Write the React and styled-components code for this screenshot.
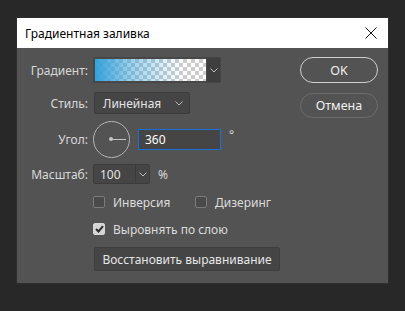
import React from "react";
import styled, { createGlobalStyle } from "styled-components";

const Global = createGlobalStyle`
  html, body { margin: 0; padding: 0; background: #282828; }
  body { font-family: "Noto Sans", "Open Sans", sans-serif; font-size: 12px; }
  * { box-sizing: border-box; }
`;

const Page = styled.div`
  width: 405px;
  height: 311px;
  padding: 18px 0 0 17px;
`;

const Dialog = styled.div`
  width: 371px;
  height: 265px;
  background: #535353;
  box-shadow: 0 0 0 1px #2e2e2e;
  display: flex;
  flex-direction: column;
`;

const TitleBar = styled.div`
  height: 30px;
  background: #ffffff;
  display: flex;
  align-items: center;
  justify-content: space-between;
  padding: 0 10px 0 8px;
  color: #000;
  font-size: 12px;
`;

const Close = styled.div`
  width: 14px;
  height: 14px;
  display: flex;
  align-items: center;
  justify-content: center;
`;

const Body = styled.div`
  flex: 1;
  display: flex;
  padding: 9px 10px 0 0;
`;

const Form = styled.div`
  flex: 1;
  display: flex;
  flex-direction: column;
`;

const Row = styled.div`
  display: grid;
  grid-template-columns: 71px auto;
  column-gap: 6px;
  align-items: center;
  height: ${(p) => p.$h}px;
  margin-top: ${(p) => p.$mt || 0}px;
`;

const Label = styled.div`
  text-align: right;
  color: #d8d8d8;
  white-space: nowrap;
`;

const Controls = styled.div`
  display: flex;
  align-items: center;
`;

const GradientBox = styled.div`
  width: 128px;
  height: 26px;
  border: 1px solid #464646;
  display: flex;
  background: #4a4a4a;
  margin-left: -1px;
`;

const Swatch = styled.div`
  width: 111px;
  margin: 1px;
  background:
    linear-gradient(to right, rgba(52, 162, 220, 1) 0%, rgba(62, 166, 220, 0.55) 30%, rgba(62, 166, 220, 0) 78%),
    repeating-conic-gradient(#ffffff 0 25%, #cccccc 0 50%) 0 0 / 8px 8px;
`;

const ArrowPart = styled.div`
  flex: 1;
  background: #3e3e3e;
  display: flex;
  align-items: center;
  justify-content: center;
`;

const Select = styled.div`
  width: ${(p) => p.$w}px;
  height: ${(p) => p.$h}px;
  background: #454545;
  border: 1px solid #3c3c3c;
  border-radius: 2px;
  display: flex;
  align-items: center;
  justify-content: space-between;
  padding: 0 6px 0 8px;
  color: #e4e4e4;
`;

const Combo = styled.div`
  width: 57px;
  height: 20px;
  background: #454545;
  border: 1px solid #3c3c3c;
  border-radius: 2px;
  display: flex;
  margin-left: -1px;
`;

const ComboValue = styled.div`
  width: 42px;
  display: flex;
  align-items: center;
  padding-left: 6px;
  color: #e4e4e4;
  border-right: 1px solid #3a3a3a;
`;

const ComboArrow = styled.div`
  flex: 1;
  display: flex;
  align-items: center;
  justify-content: center;
`;

const Dial = styled.div`
  width: 37px;
  height: 37px;
  border: 1.5px solid #b4b4b4;
  border-radius: 50%;
  position: relative;
  margin-left: -1px;
`;

const DialHand = styled.div`
  position: absolute;
  left: 16px;
  top: 16.5px;
  width: 16px;
  height: 1.5px;
  background: #c4c4c4;
`;

const DialDot = styled.div`
  position: absolute;
  left: 14.5px;
  top: 15px;
  width: 4px;
  height: 4px;
  border-radius: 50%;
  background: #c4c4c4;
`;

const Input = styled.div`
  width: 83px;
  height: 21px;
  border: 1px solid #1b6fd6;
  background: #454545;
  color: #ffffff;
  display: flex;
  align-items: center;
  padding-left: 6px;
  margin-left: 8px;
`;

const Unit = styled.span`
  color: #d8d8d8;
  margin-left: ${(p) => p.$ml}px;
  align-self: ${(p) => (p.$top ? "flex-start" : "center")};
  margin-top: ${(p) => (p.$top ? 5 : 0)}px;
`;

const Checks = styled.div`
  display: flex;
  align-items: center;
  padding-left: 76px;
  height: 16px;
  margin-top: ${(p) => p.$mt}px;
`;

const Check = styled.label`
  display: flex;
  align-items: center;
  gap: 8px;
  color: #dcdcdc;
  width: ${(p) => p.$w || "auto"};
`;

const Box = styled.span`
  width: 12px;
  height: 12px;
  border-radius: 2px;
  border: 1px solid ${(p) => (p.$on ? "#d6d6d6" : "#7c7c7c")};
  background: ${(p) => (p.$on ? "#d6d6d6" : "#4a4a4a")};
  display: flex;
  align-items: center;
  justify-content: center;
`;

const PlainButton = styled.div`
  width: 186px;
  height: 24px;
  margin-left: 77px;
  margin-top: ${(p) => p.$mt}px;
  background: #454545;
  border: 1px solid #3e3e3e;
  border-radius: 2px;
  color: #e6e6e6;
  display: flex;
  align-items: center;
  justify-content: center;
`;

const Side = styled.div`
  width: 78px;
  display: flex;
  flex-direction: column;
  gap: 10px;
`;

const PillButton = styled.div`
  height: ${(p) => p.$h}px;
  border-radius: 13px;
  border: ${(p) => (p.$primary ? "1.5px solid #cfcfcf" : "1.5px solid #6c6c6c")};
  color: #f0f0f0;
  font-size: 12.5px;
  display: flex;
  align-items: center;
  justify-content: center;
`;

const Chevron = () => (
  <svg width="8" height="5" viewBox="0 0 8 5">
    <path d="M0.5 0.5 L4 4 L7.5 0.5" fill="none" stroke="#bdbdbd" strokeWidth="1" />
  </svg>
);

export default function App() {
  return (
    <>
      <Global />
      <Page>
        <Dialog>
          <TitleBar>
            <span>Градиентная заливка</span>
            <Close>
              <svg width="12" height="12" viewBox="0 0 12 12">
                <path d="M0.5 0.5 L11.5 11.5 M11.5 0.5 L0.5 11.5" stroke="#111" strokeWidth="1" />
              </svg>
            </Close>
          </TitleBar>
          <Body>
            <Form>
              <Row $h={26}>
                <Label>Градиент:</Label>
                <Controls>
                  <GradientBox>
                    <Swatch />
                    <ArrowPart>
                      <Chevron />
                    </ArrowPart>
                  </GradientBox>
                </Controls>
              </Row>
              <Row $h={22} $mt={9}>
                <Label>Стиль:</Label>
                <Controls>
                  <Select $w={96} $h={22}>
                    <span>Линейная</span>
                    <Chevron />
                  </Select>
                </Controls>
              </Row>
              <Row $h={37} $mt={7}>
                <Label>Угол:</Label>
                <Controls>
                  <Dial>
                    <DialHand />
                    <DialDot />
                  </Dial>
                  <Input>360</Input>
                  <Unit $ml={8} $top>°</Unit>
                </Controls>
              </Row>
              <Row $h={20} $mt={6}>
                <Label>Масштаб:</Label>
                <Controls>
                  <Combo>
                    <ComboValue>100</ComboValue>
                    <ComboArrow>
                      <Chevron />
                    </ComboArrow>
                  </Combo>
                  <Unit $ml={8}>%</Unit>
                </Controls>
              </Row>
              <Checks $mt={10}>
                <Check $w="102px">
                  <Box />
                  Инверсия
                </Check>
                <Check>
                  <Box />
                  Дизеринг
                </Check>
              </Checks>
              <Checks $mt={11}>
                <Check>
                  <Box $on>
                    <svg width="9" height="8" viewBox="0 0 9 8">
                      <path d="M1 4 L3.5 6.5 L8 1.2" fill="none" stroke="#2a2a2a" strokeWidth="2" />
                    </svg>
                  </Box>
                  Выровнять по слою
                </Check>
              </Checks>
              <PlainButton $mt={10}>Восстановить выравнивание</PlainButton>
            </Form>
            <Side>
              <PillButton $primary $h={26}>OK</PillButton>
              <PillButton $h={25}>Отмена</PillButton>
            </Side>
          </Body>
        </Dialog>
      </Page>
    </>
  );
}
